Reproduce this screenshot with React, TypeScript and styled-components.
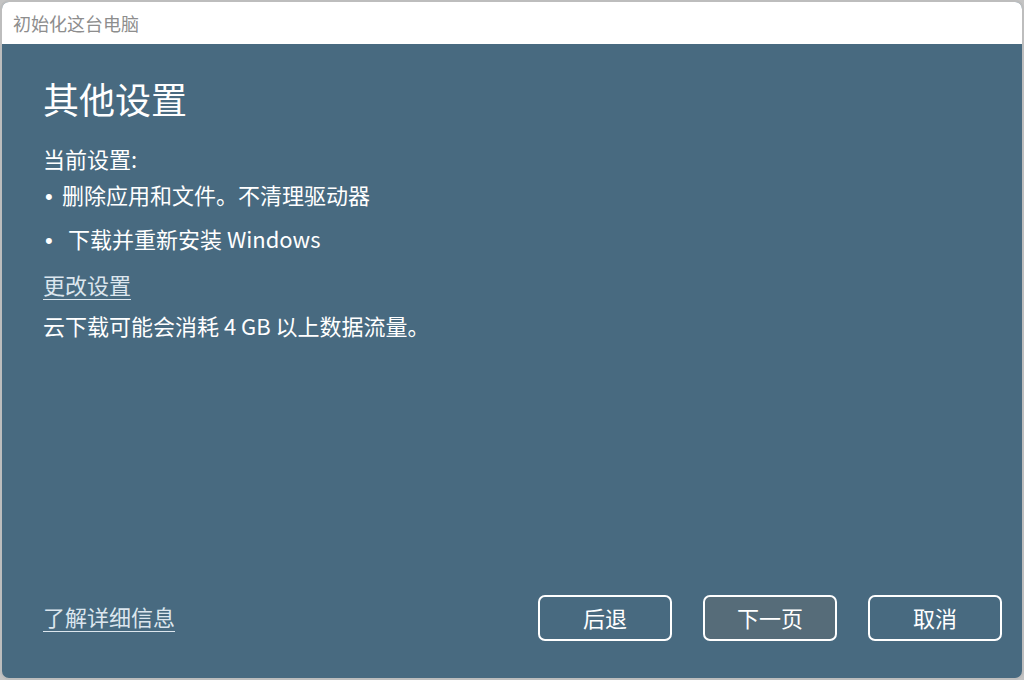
import React, { FC } from "react";
import styled, { createGlobalStyle } from "styled-components";

const GlobalStyle = createGlobalStyle`
  html, body {
    margin: 0;
    padding: 0;
    width: 1024px;
    height: 680px;
    overflow: hidden;
    background: #c4c4c4;
    font-family: "Noto Sans CJK SC", "Noto Sans", sans-serif;
  }
`;

const Window = styled.div`
  box-sizing: border-box;
  width: 1024px;
  height: 680px;
  border: 2px solid #bdbdbd;
  border-radius: 9px;
  overflow: hidden;
  display: flex;
  flex-direction: column;
  background: #486a80;
`;

const TitleBar = styled.div`
  height: 42px;
  flex: none;
  background: #ffffff;
  display: flex;
  align-items: center;
  padding-left: 11px;
  font-size: 18px;
  color: #8d8d8d;
`;

const Body = styled.div`
  flex: 1;
  display: flex;
  flex-direction: column;
  padding: 30px 20px 37px 41px;
  color: #ffffff;
`;

const Heading = styled.h1`
  margin: 0 0 21px;
  font-size: 36px;
  font-weight: 400;
  line-height: 48px;
`;

const Line = styled.div<{ $gap?: number }>`
  font-size: 22px;
  line-height: 30px;
  height: 30px;
  white-space: nowrap;
  margin-bottom: ${(p) => p.$gap ?? 14}px;
`;

// bullet mark, a bit wider on the second row as in the original
const Bullet = styled.span<{ $wide?: boolean }>`
  display: inline-block;
  font-family: "Liberation Sans", sans-serif;
  line-height: 1;
  margin-left: 2px;
  width: ${(p) => (p.$wide ? 23 : 17)}px;
`;

const Link = styled.a<{ $lift?: number }>`
  color: #dce6ee;
  text-decoration: underline;
  text-underline-offset: 5px;
  text-decoration-thickness: 1px;
  font-size: 22px;
  line-height: 30px;
  padding-bottom: ${(p) => p.$lift ?? 0}px;
  cursor: pointer;
`;

const Spacer = styled.div`
  flex: 1;
`;

const Footer = styled.div`
  display: flex;
  align-items: center;
`;

const Buttons = styled.div`
  margin-left: auto;
  display: flex;
  gap: 31px;
`;

const Button = styled.button<{ $primary?: boolean }>`
  box-sizing: border-box;
  width: 134px;
  height: 46px;
  border: 2px solid #ffffff;
  border-radius: 7px;
  background: ${(p) => (p.$primary ? "#566c79" : "transparent")};
  color: #ffffff;
  font-family: inherit;
  font-size: 22px;
  padding: 0 0 3px;
`;

const App: FC = () => (
  <>
    <GlobalStyle />
    <Window>
      <TitleBar>初始化这台电脑</TitleBar>
      <Body>
        <Heading>其他设置</Heading>
        <Line $gap={6}>当前设置:</Line>
        <Line $gap={14}>
          <Bullet>•</Bullet>删除应用和文件。不清理驱动器
        </Line>
        <Line $gap={16}>
          <Bullet $wide>•</Bullet>下载并重新安装 Windows
        </Line>
        <Line $gap={11}>
          <Link>更改设置</Link>
        </Line>
        <Line>云下载可能会消耗 4 GB 以上数据流量。</Line>
        <Spacer />
        <Footer>
          <Link $lift={4}>了解详细信息</Link>
          <Buttons>
            <Button>后退</Button>
            <Button $primary>下一页</Button>
            <Button>取消</Button>
          </Buttons>
        </Footer>
      </Body>
    </Window>
  </>
);

export default App;
